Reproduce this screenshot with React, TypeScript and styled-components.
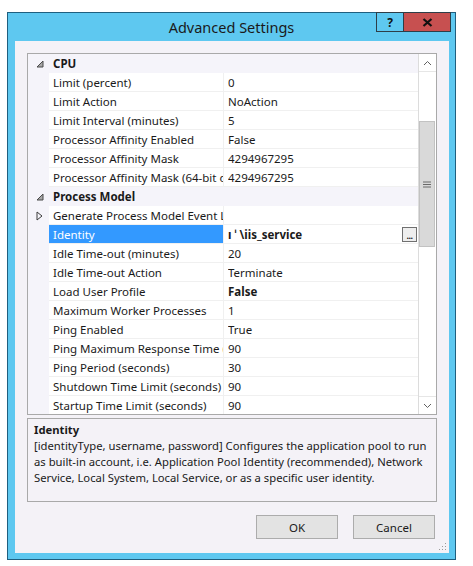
import React from "react";
import styled, { createGlobalStyle } from "styled-components";

const GlobalStyle = createGlobalStyle`
  html, body { margin: 0; padding: 0; background: #ffffff; }
  body { font-family: "Noto Sans", "Open Sans", sans-serif; }
  * { box-sizing: border-box; }
`;

const Page = styled.div`
  padding: 12px 0 0 7px;
`;

const Window = styled.div`
  width: 449px;
  height: 548px;
  border: 1px solid #1f5f7f;
  background: #5ec8f0;
  display: flex;
  flex-direction: column;
`;

const TitleBar = styled.div`
  height: 28px;
  display: grid;
  grid-template-columns: 1fr auto 1fr;
  align-items: start;
`;

const Title = styled.div`
  grid-column: 2;
  font-size: 14.5px;
  color: #1a1a1a;
  line-height: 28px;
`;

const Controls = styled.div`
  grid-column: 3;
  justify-self: end;
  display: flex;
  margin-top: -1px;
  margin-right: 4px;
`;

const CtrlButton = styled.div<{ $close?: boolean }>`
  width: ${(p) => (p.$close ? "47px" : "28px")};
  height: 20px;
  background: ${(p) => (p.$close ? "#c75050" : "#5ec8f0")};
  border: 1px solid #2d3e48;
  border-left-width: ${(p) => (p.$close ? "0" : "1px")};
  display: flex;
  align-items: center;
  justify-content: center;
  font-weight: 700;
  font-size: 12px;
  color: #111;
`;

const Body = styled.div`
  position: relative;
  flex: 1;
  margin: 0 6px 6px 7px;
  background: #f4f2f7;
  padding: 12px 12px 14px 12px;
  display: flex;
  flex-direction: column;
`;

const Grid = styled.div`
  height: 362px;
  border: 1px solid #a9a9a9;
  background: #ffffff;
  display: flex;
  overflow: hidden;
`;

const Rows = styled.div`
  flex: 1;
  display: flex;
  flex-direction: column;
  overflow: hidden;
`;

const Row = styled.div`
  height: 19px;
  flex: 0 0 19px;
  display: grid;
  grid-template-columns: 21px 174px 1fr;
  font-size: 11.5px;
  color: #1a1a1a;
`;

const CategoryRow = styled(Row)`
  background: #f5f4fa;
  font-weight: 700;
  grid-template-columns: 21px 1fr;
`;

const Margin = styled.div`
  background: #f5f4fa;
  display: flex;
  align-items: center;
  justify-content: center;
  padding-left: 2px;
`;

const Cell = styled.div<{ $selected?: boolean; $bold?: boolean }>`
  display: flex;
  align-items: center;
  white-space: nowrap;
  overflow: hidden;
  padding-left: 4px;
  border-bottom: 1px solid #f0f0f0;
  background: ${(p) => (p.$selected ? "#3399ff" : "#ffffff")};
  color: ${(p) => (p.$selected ? "#ffffff" : "#1a1a1a")};
  font-weight: ${(p) => (p.$bold ? 700 : 400)};
`;

const ValueCell = styled(Cell)`
  border-left: 1px solid #f0f0f0;
  padding-left: 4px;
  padding-right: 1px;
`;

const ValueText = styled.span`
  flex: 1;
  overflow: hidden;
`;

const CatLabel = styled.div`
  display: flex;
  align-items: center;
  padding-left: 4px;
`;

const Ellipsis = styled.div`
  width: 15px;
  height: 15px;
  border: 1px solid #707070;
  background: #eeeeee;
  font-size: 9px;
  font-weight: 700;
  line-height: 15px;
  text-align: center;
  color: #222;
  letter-spacing: -0.5px;
`;

const ScrollBar = styled.div`
  width: 18px;
  border-left: 1px solid #dcdcdc;
  background: #ffffff;
  display: flex;
  flex-direction: column;
`;

const Arrow = styled.div`
  height: 18px;
  display: flex;
  align-items: center;
  justify-content: center;
  border-bottom: 1px solid #e6e6e6;
`;

const ArrowDown = styled(Arrow)`
  border-bottom: none;
  border-top: 1px solid #e6e6e6;
`;

const Track = styled.div<{ $grow?: boolean; $h?: number }>`
  flex: ${(p) => (p.$grow ? "1" : `0 0 ${p.$h}px`)};
`;

const Thumb = styled.div`
  height: 126px;
  margin-right: 1px;
  background: #d9d9d9;
  border: 1px solid #c2c2c2;
  display: flex;
  align-items: center;
  justify-content: center;
`;

const Desc = styled.div`
  margin-top: 3px;
  height: 84px;
  border: 1px solid #a9a9a9;
  padding: 3px 6px;
  font-size: 11.25px;
  line-height: 16px;
  color: #1a1a1a;
`;

const DescTitle = styled.div`
  font-weight: 700;
`;

const Buttons = styled.div`
  margin-top: 13px;
  display: flex;
  justify-content: flex-end;
  gap: 15px;
  padding-right: 2px;
`;

const Button = styled.div`
  width: 82px;
  height: 24px;
  background: #e3e3e3;
  border: 1px solid #acacac;
  display: flex;
  align-items: center;
  justify-content: center;
  font-size: 11.5px;
  color: #1a1a1a;
`;

const Grip = styled.div`
  position: absolute;
  right: 2px;
  bottom: 2px;
  line-height: 0;
`;

type Prop = {
  label: string;
  value?: string;
  bold?: boolean;
  selected?: boolean;
  expand?: boolean;
  button?: boolean;
};

type Item = { category: string } | Prop;

const items: Item[] = [
  { category: "CPU" },
  { label: "Limit (percent)", value: "0" },
  { label: "Limit Action", value: "NoAction" },
  { label: "Limit Interval (minutes)", value: "5" },
  { label: "Processor Affinity Enabled", value: "False" },
  { label: "Processor Affinity Mask", value: "4294967295" },
  { label: "Processor Affinity Mask (64-bit option)", value: "4294967295" },
  { category: "Process Model" },
  { label: "Generate Process Model Event Log Entry", value: "", expand: true },
  { label: "Identity", value: "ı ˈ \\iis_service", bold: true, selected: true, button: true },
  { label: "Idle Time-out (minutes)", value: "20" },
  { label: "Idle Time-out Action", value: "Terminate" },
  { label: "Load User Profile", value: "False", bold: true },
  { label: "Maximum Worker Processes", value: "1" },
  { label: "Ping Enabled", value: "True" },
  { label: "Ping Maximum Response Time (seconds)", value: "90" },
  { label: "Ping Period (seconds)", value: "30" },
  { label: "Shutdown Time Limit (seconds)", value: "90" },
  { label: "Startup Time Limit (seconds)", value: "90" },
];

const Collapse = () => (
  <svg width="8" height="8" viewBox="0 0 8 8">
    <polygon points="7,1 7,7 1,7" fill="#a8a8a8" stroke="#4a4a4a" strokeWidth="1" />
  </svg>
);

const Expand = () => (
  <svg width="7" height="10" viewBox="0 0 7 10">
    <polygon points="1,1 6,5 1,9" fill="none" stroke="#3c3c3c" strokeWidth="1" />
  </svg>
);

export default function App() {
  return (
    <>
      <GlobalStyle />
      <Page>
        <Window>
          <TitleBar>
            <Title>Advanced Settings</Title>
            <Controls>
              <CtrlButton>?</CtrlButton>
              <CtrlButton $close>
                <svg width="11" height="9" viewBox="0 0 11 9">
                  <path d="M1.5 1 L9.5 8 M9.5 1 L1.5 8" stroke="#111" strokeWidth="2.2" />
                </svg>
              </CtrlButton>
            </Controls>
          </TitleBar>
          <Body>
            <Grid>
              <Rows>
                {items.map((it, i) =>
                  "category" in it ? (
                    <CategoryRow key={i}>
                      <Margin>
                        <Collapse />
                      </Margin>
                      <CatLabel>{it.category}</CatLabel>
                    </CategoryRow>
                  ) : (
                    <Row key={i}>
                      <Margin>{it.expand ? <Expand /> : null}</Margin>
                      <Cell $selected={it.selected}>{it.label}</Cell>
                      <ValueCell $bold={it.bold}>
                        <ValueText>{it.value}</ValueText>
                        {it.button ? <Ellipsis>...</Ellipsis> : null}
                      </ValueCell>
                    </Row>
                  )
                )}
              </Rows>
              <ScrollBar>
                <Arrow>
                  <svg width="9" height="6" viewBox="0 0 9 6">
                    <path d="M1 5 L4.5 1.5 L8 5" fill="none" stroke="#606060" strokeWidth="1" />
                  </svg>
                </Arrow>
                <Track $h={49} />
                <Thumb>
                  <svg width="8" height="7" viewBox="0 0 8 7">
                    <path d="M0 1 H8 M0 3.5 H8 M0 6 H8" stroke="#6a6a6a" strokeWidth="1" />
                  </svg>
                </Thumb>
                <Track $grow />
                <ArrowDown>
                  <svg width="9" height="6" viewBox="0 0 9 6">
                    <path d="M1 1 L4.5 4.5 L8 1" fill="none" stroke="#606060" strokeWidth="1" />
                  </svg>
                </ArrowDown>
              </ScrollBar>
            </Grid>
            <Desc>
              <DescTitle>Identity</DescTitle>
              <div>
                [identityType, username, password] Configures the application pool to run as built-in
                account, i.e. Application Pool Identity (recommended), Network Service, Local System,
                Local Service, or as a specific user identity.
              </div>
            </Desc>
            <Buttons>
              <Button>OK</Button>
              <Button>Cancel</Button>
            </Buttons>
            <Grip>
              <svg width="8" height="8" viewBox="0 0 8 8">
                <rect x="6" y="0" width="1" height="1" fill="#9a9a9a" />
                <rect x="3" y="3" width="1" height="1" fill="#9a9a9a" />
                <rect x="6" y="3" width="1" height="1" fill="#9a9a9a" />
                <rect x="0" y="6" width="1" height="1" fill="#9a9a9a" />
                <rect x="3" y="6" width="1" height="1" fill="#9a9a9a" />
                <rect x="6" y="6" width="1" height="1" fill="#9a9a9a" />
              </svg>
            </Grip>
          </Body>
        </Window>
      </Page>
    </>
  );
}
